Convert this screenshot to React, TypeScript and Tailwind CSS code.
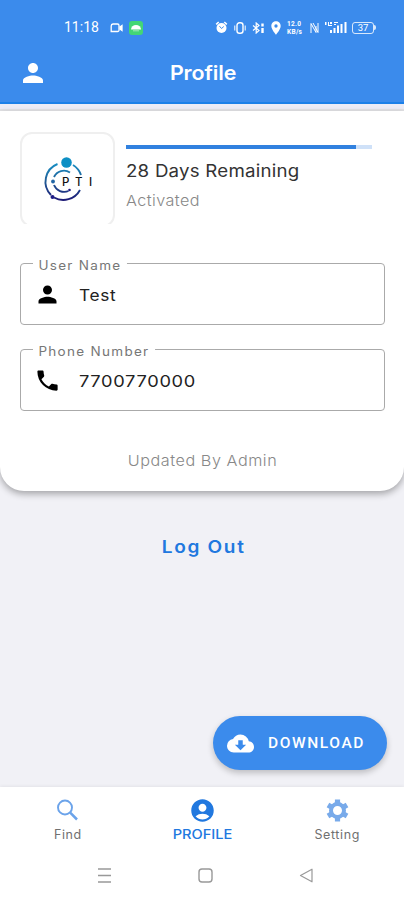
import { useState, type ReactNode } from 'react'
import type { IconType } from 'react-icons'
import { MdPerson, MdPhone, MdCloudDownload, MdAccountCircle, MdLocationOn } from 'react-icons/md'

const DAYS_LEFT = 28
const PLAN_DAYS = 30

function StatusBar() {
  return (
    <div className="flex h-[54px] items-center pt-[1px] pl-[64px] text-white">
      <span className="w-[46px] font-['Roboto',sans-serif] text-[14px]">11:18</span>
      <svg className="h-[10px] w-[13px]" viewBox="0 0 13 10" fill="none" stroke="currentColor" strokeWidth="1.3">
        <path d="M3 1h4.5a1.5 1.5 0 0 1 1.5 1.5v4A1.5 1.5 0 0 1 7.500 8.500H1.200V3A2 2 0 0 1 3 1z" />
        <path d="M9.500 4.200L12 2.500v5L9.500 5.800" fill="currentColor" />
      </svg>
      <span className="ml-[6px] flex h-[14px] w-[14px] items-center justify-center rounded-[3px] bg-[#43d675]">
        <svg className="h-[8px] w-[10px]" viewBox="0 0 10 8" fill="currentColor">
          <path d="M0 5.500a5 4.500 0 0 1 10 0z" />
          <rect x="2" y="6.300" width="6" height="1" opacity=".5" />
        </svg>
      </span>
      <svg className="ml-[72px] h-[13px] w-[13px]" viewBox="0 0 12 13">
        <circle cx="6" cy="7" r="5" fill="currentColor" />
        <path d="M.7 3.300L3.200 1M11.300 3.300L8.800 1" stroke="currentColor" strokeWidth="1.600" />
        <path d="M4 5.200l2 2.300 2.300-2" stroke="#3b8bec" fill="none" />
      </svg>
      <svg className="ml-[6px] h-[12px] w-[12px]" viewBox="0 0 12 12" fill="none" stroke="currentColor">
        <rect x="3" y=".7" width="6" height="10.600" rx="2.500" strokeWidth="1.400" />
        <path d="M.8 3.500v5M11.200 3.500v5" />
      </svg>
      <svg className="ml-[6px] h-[12px] w-[13px]" viewBox="0 0 13 12" fill="none" stroke="currentColor" strokeWidth="1.200">
        <path d="M1 3.500l6 5L4.200 11V1L7 3.500l-6 5" />
        <path d="M10.500 1.500v3M10.500 6v5" strokeWidth="2.400" />
      </svg>
      <MdLocationOn className="ml-[3px] h-[16px] w-[16px]" />
      <span className="ml-[3px] flex w-[17px] flex-col font-['Roboto',sans-serif] text-[6.5px] leading-[8px] font-bold tracking-[0.3px]">
        <span>12.0</span>
        <span>KB/s</span>
      </span>
      <svg className="ml-[6px] h-[12px] w-[9px]" viewBox="0 0 9 12" fill="none" stroke="currentColor">
        <path d="M1 11V1.500l5 9V4M3 1l5 9.500V1" />
      </svg>
      <svg className="ml-[5px] h-[13px] w-[23px]" viewBox="0 0 23 13" fill="currentColor">
        <path d="M1 1h1.500v3H1zM4 1h1v3h3v1H4zM6 1h2v2H6z" />
        <path d="M6 9h2v3H6zM9.500 7h2v5h-2zM13 4.500h2V12h-2zM16.500 3h2v9h-2zM20.500 1h2v11h-2zM10 1h4v1h-4zM10 3h2v1h-2z" />
      </svg>
      <span className="ml-[5px] flex h-[12px] w-[22px] items-center justify-center rounded-[3px] border border-white/80 font-['Roboto',sans-serif] text-[9.5px] leading-none">
        37
      </span>
      <span className="h-[5px] w-[2px] rounded-r bg-white/80" />
    </div>
  )
}

function Logo() {
  return (
    <svg className="h-[52px] w-[56px]" viewBox="0 0 56 52" fill="none">
      <defs>
        <linearGradient id="ring" x1="0" y1="6" x2="0" y2="48" gradientUnits="userSpaceOnUse">
          <stop offset="0" stopColor="#149bd0" />
          <stop offset=".5" stopColor="#226098" />
          <stop offset="1" stopColor="#1b1674" />
        </linearGradient>
      </defs>
      <g stroke="url(#ring)" strokeWidth="1.900">
        <path d="M17.500 11A19 19 0 0 0 11 42" />
        <path d="M14 44.500A19 19 0 0 0 40 37" />
        <path d="M33 12A19 19 0 0 1 41 22" />
        <path d="M30 19.500A11 11 0 0 0 14 24" />
        <path d="M14 32A11 11 0 0 0 28.500 38" />
      </g>
      <circle cx="26.500" cy="9.500" r="5.300" fill="#0d8fc4" />
      <circle cx="13" cy="28.500" r="1.900" fill="#2166a5" />
      <circle cx="12.500" cy="44" r="2" fill="#1d1b85" />
      <circle cx="29.500" cy="37" r="1.300" fill="#1d1b85" />
      <text y="33" fill="#111" fontFamily="Inter, sans-serif" fontSize="11.500" fontWeight="500">
        <tspan x="22">P</tspan>
        <tspan x="35">T</tspan>
        <tspan x="49">I</tspan>
      </text>
    </svg>
  )
}

interface FieldProps {
  label: string
  value: string
  icon: IconType
  valueClass: string
}

function Field({ label, value, icon: Icon, valueClass }: FieldProps) {
  return (
    <div className="relative flex h-[62px] items-center rounded-[4px] border border-[#aaa] pt-[1px] pl-[13px]">
      <span className="absolute -top-[8px] left-[12px] origin-left scale-x-[1.08] bg-white px-[5px] text-[12.5px] leading-[20px] tracking-[1.2px] whitespace-nowrap text-[#777]">
        {label}
      </span>
      <Icon className="h-[27px] w-[27px] text-black" />
      <span className={`ml-[18px] origin-left text-[16px] tracking-[0.6px] text-[#222] ${valueClass}`}>{value}</span>
    </div>
  )
}

function SearchIcon() {
  return (
    <svg className="h-[27px] w-[27px]" viewBox="0 0 27 27" fill="none" stroke="#6ba3ea">
      <circle cx="11" cy="10.500" r="7" strokeWidth="1.900" />
      <path d="M16.200 15.700l6.800 6.800" strokeWidth="2.500" />
    </svg>
  )
}

function GearIcon() {
  return (
    <svg className="h-[27px] w-[27px]" viewBox="0 0 27 27" fill="none" stroke="#78aaea">
      <circle cx="13.500" cy="13.500" r="6.500" strokeWidth="4" />
      <g strokeWidth="5.200">
        {[0, 60, 120, 180, 240, 300].map((deg) => (
          <path key={deg} d="M13.500 2.500v4" transform={`rotate(${deg} 13.500 13.500)`} />
        ))}
      </g>
    </svg>
  )
}

function Tab({ label, className, onClick, children }: { label: string; className: string; onClick: () => void; children: ReactNode }) {
  return (
    <button onClick={onClick} className="flex flex-1 flex-col items-center pt-[10px] pl-[1px]">
      {children}
      <span className={`mt-[1px] text-[12.5px] leading-[20px] ${className}`}>{label}</span>
    </button>
  )
}

export default function App() {
  const [, setTab] = useState('profile')

  return (
    <div className="flex h-[900px] w-[404px] flex-col overflow-hidden bg-[#f1f1f6] font-['Inter',sans-serif]">
      <header className="h-[104px] shrink-0 border-b-2 border-[#1c80e8] bg-[#3b8bec]">
        <StatusBar />
        <div className="grid h-[38px] grid-cols-[1fr_auto_1fr] items-center text-white">
          <MdPerson className="ml-[18px] h-[30px] w-[30px]" />
          <h1 className="scale-x-[1.07] pl-[2px] text-[20px] font-semibold tracking-[-0.1px]">Profile</h1>
        </div>
      </header>

      <main className="flex flex-1 flex-col">
        <div className="h-[7px] border-b-2 border-[#e3e3e6] bg-[#ececf6]" />

        {/* Account card */}
        <section className="flex h-[380px] flex-col rounded-b-[24px] bg-white px-[20px] shadow-[0_3px_7px_rgba(0,0,0,0.32)]">
          <div className="flex pt-[21px]">
            <div className="h-[92px] w-[95px] overflow-hidden">
              <div className="flex h-[95px] items-center justify-center rounded-[12px] border-2 border-[#efefef] pb-[2px]">
                <Logo />
              </div>
            </div>
            <div className="ml-[11px] pt-[13px]">
              <div className="h-[4px] w-[246px] bg-[#cfe1f8]">
                <div className="h-full bg-[#3181df]" style={{ width: `${(DAYS_LEFT / PLAN_DAYS) * 100}%` }} />
              </div>
              <p className="mt-[10px] origin-left scale-x-[1.1] text-[17px] leading-[24px] tracking-[0.2px] text-[#333]">{DAYS_LEFT} Days Remaining</p>
              <p className="mt-[8px] origin-left scale-x-[1.08] text-[15px] leading-[20px] font-light tracking-[0.4px] text-[#888]">Activated</p>
            </div>
          </div>

          <div className="-mr-[1px] mt-[39px] flex flex-col gap-[24px]">
            <Field label="User Name" value="Test" icon={MdPerson} valueClass="scale-x-[1.08]" />
            <Field label="Phone Number" value="7700770000" icon={MdPhone} valueClass="scale-x-[1.14]" />
          </div>

          <p className="mt-[40px] scale-x-[1.08] pl-[1px] text-center text-[15px] leading-[20px] font-light tracking-[0.5px] text-[#888]">Updated By Admin</p>
        </section>

        <button className="mt-[44px] scale-x-[1.12] self-center pl-[3px] text-[17px] leading-[24px] font-semibold tracking-[1.5px] text-[#2178df]">
          Log Out
        </button>

        <button className="mt-auto mr-[17px] mb-[17px] flex h-[54px] w-[174px] items-center self-end rounded-full bg-[#3b8bec] pl-[14px] text-white shadow-[0_3px_6px_rgba(0,0,0,0.22)]">
          <MdCloudDownload className="h-[27px] w-[27px]" />
          <span className="ml-[14px] pt-[2px] font-['Roboto',sans-serif] text-[15.5px] font-medium tracking-[1.6px]">DOWNLOAD</span>
        </button>
      </main>

      <nav className="flex h-[63px] shrink-0 bg-white text-[#707070] shadow-[0_-1px_3px_rgba(0,0,0,0.06)]">
        <Tab label="Find" className="tracking-[0.6px]" onClick={() => setTab('find')}>
          <SearchIcon />
        </Tab>
        <Tab label="PROFILE" className="scale-x-[1.17] font-medium text-[#2178df]" onClick={() => setTab('profile')}>
          <MdAccountCircle className="h-[27px] w-[27px] text-[#2178df]" />
        </Tab>
        <Tab label="Setting" className="tracking-[0.6px]" onClick={() => setTab('setting')}>
          <GearIcon />
        </Tab>
      </nav>

      {/* System navigation */}
      <div className="flex h-[50px] shrink-0 items-start justify-center gap-[86px] bg-white pt-[18px] pl-[7px] text-[#999]">
        <svg className="h-[15px] w-[15px]" viewBox="0 0 15 15" stroke="currentColor" strokeWidth="1.300">
          <path d="M1 1h13M1 7.500h13M1 14h13" />
        </svg>
        <svg className="h-[15px] w-[15px]" viewBox="0 0 15 15" fill="none" stroke="currentColor" strokeWidth="1.400">
          <rect x="1" y="1" width="13" height="13" rx="3" />
        </svg>
        <svg className="h-[15px] w-[15px]" viewBox="0 0 15 15" fill="none" stroke="currentColor" strokeWidth="1.200" strokeLinejoin="round">
          <path d="M13 1.200v12.600L1.500 7.500z" />
        </svg>
      </div>
    </div>
  )
}
